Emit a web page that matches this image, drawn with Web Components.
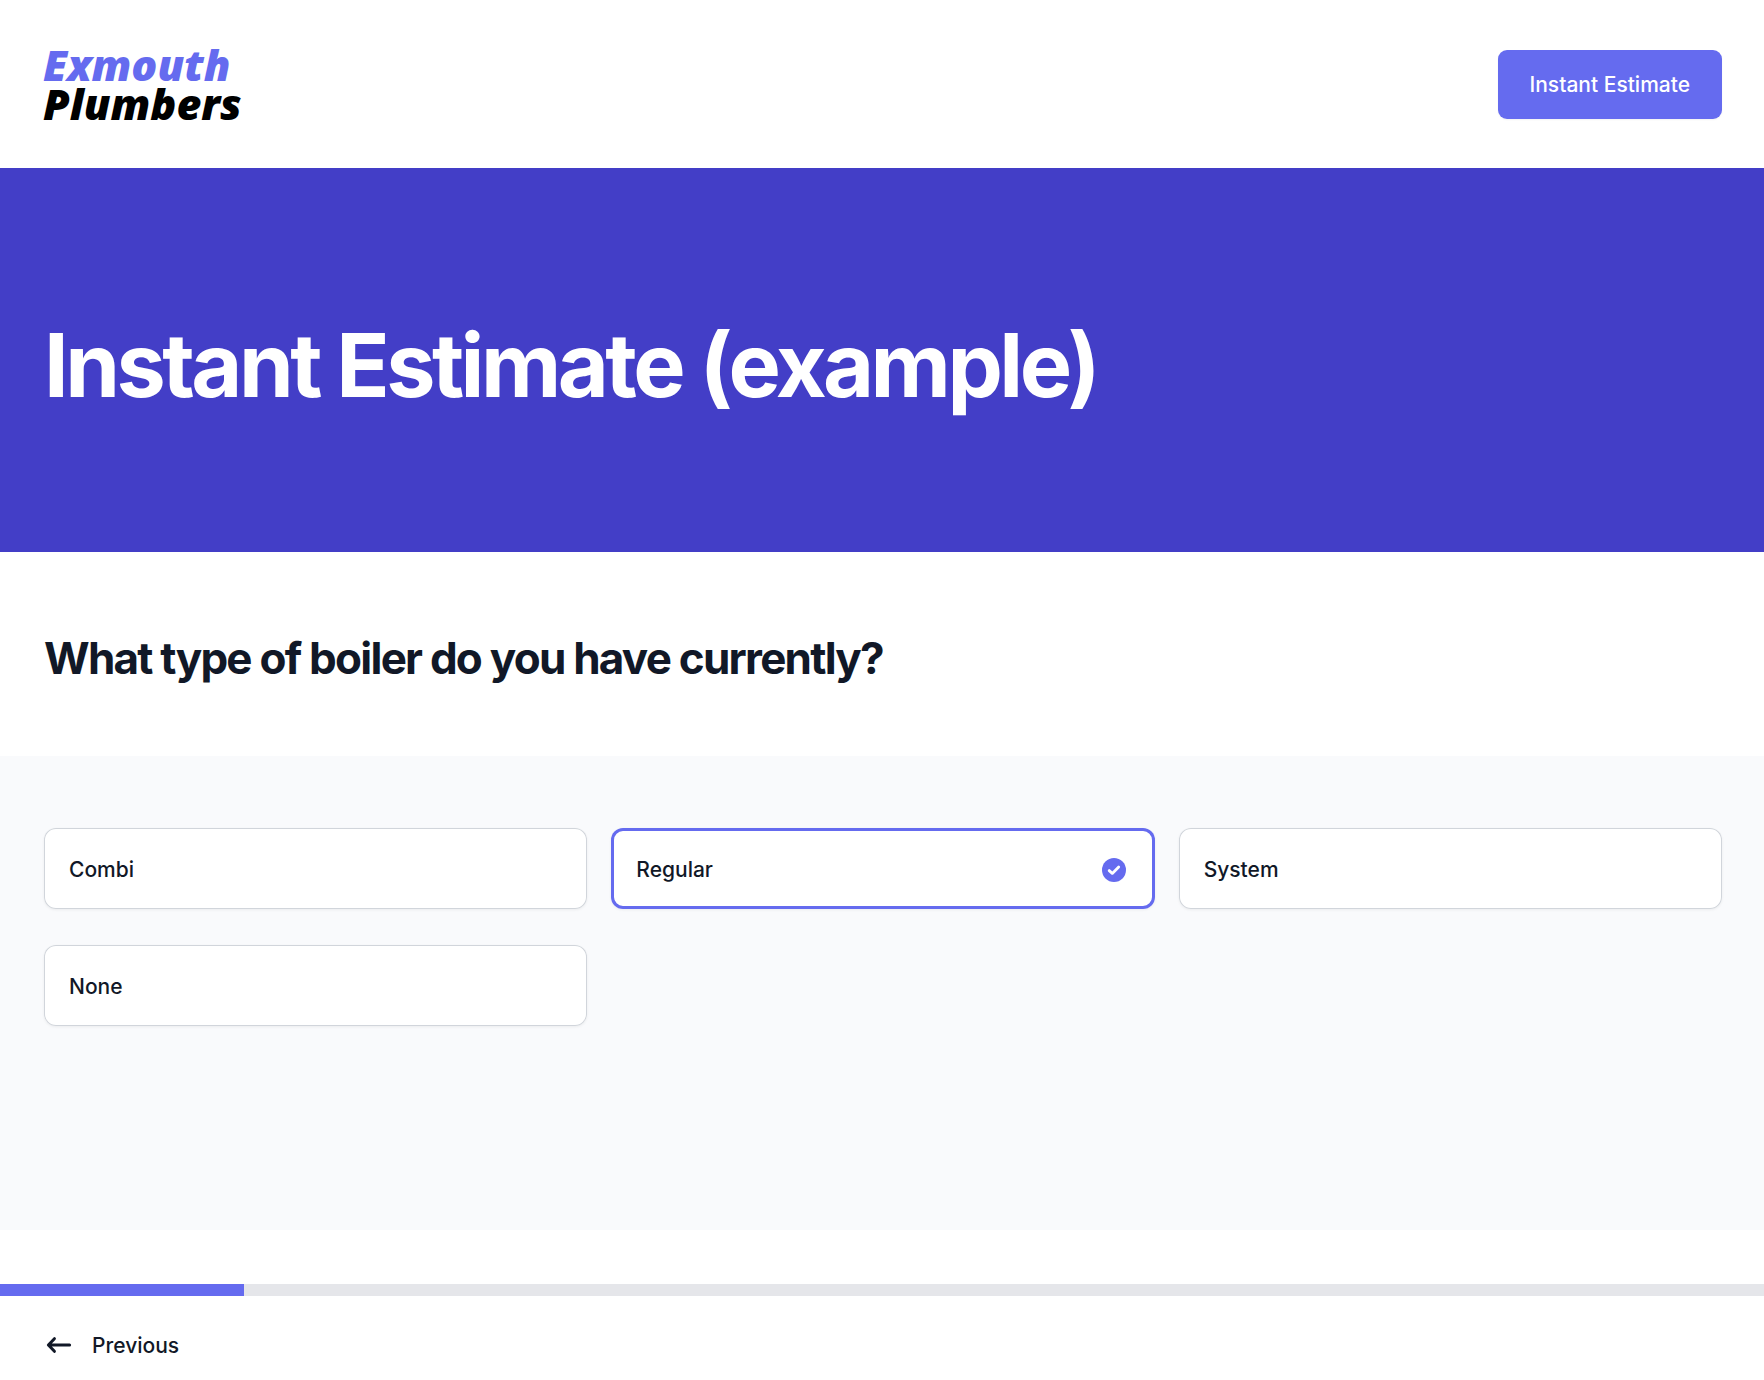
<!DOCTYPE html>
<html lang="en">
<head>
<meta charset="utf-8">
<meta name="viewport" content="width=device-width, initial-scale=1">
<title>Instant Estimate - Exmouth Plumbers</title>
<style>
:root {
  --brand: #656bef;
  --brand-dark: #433ec7;
  --ink: #111827;
  --gutter: 44px;
}
body {
  margin: 0;
  background: #fff;
  color: var(--ink);
  font: 500 21px/27px Inter, "Liberation Sans", sans-serif;
}
</style>
</head>
<body>
<estimate-page></estimate-page>

<script>
const define = (name, html, setup) => {
  const template = document.createElement('template');
  template.innerHTML = html;
  customElements.define(name, class extends HTMLElement {
    constructor() {
      super();
      this.attachShadow({ mode: 'open' }).append(template.content.cloneNode(true));
    }
    connectedCallback() { if (setup) setup(this, this.shadowRoot); }
  });
};

define('brand-logo', `
<style>
:host { display: block; }
a { display: block; color: #000; text-decoration: none; font: italic 800 43px/39px "Open Sans", "Noto Sans", sans-serif; }
span { display: block; }
.first { color: var(--brand); }
</style>
<a href="#"><span class="first">Exmouth</span><span>Plumbers</span></a>`);

define('cta-button', `
<style>
:host { display: block; }
button {
  display: block; margin: 0; padding: 21px 32px; border: 0; border-radius: 9px;
  background: var(--brand); color: #fff; font: inherit; cursor: pointer;
  box-shadow: 0 1px 2px rgb(0 0 0 / 5%);
}
</style>
<button type="button"><slot></slot></button>`);

define('site-header', `
<style>
:host { display: block; }
header { display: flex; align-items: center; justify-content: space-between; padding: 45px 42px 45px 43px; }
</style>
<header><brand-logo></brand-logo><cta-button>Instant Estimate</cta-button></header>`);

define('page-hero', `
<style>
:host { display: block; background: var(--brand-dark); }
h1 { margin: 0; padding: 152px var(--gutter) 142px; color: #fff; font-size: 88px; line-height: 90px; font-weight: 700; letter-spacing: -0.04em; }
</style>
<h1><slot></slot></h1>`);

define('question-title', `
<style>
:host { display: block; }
h2 { margin: 0; padding: 81px var(--gutter) 73px; font-size: 44px; line-height: 50px; font-weight: 700; letter-spacing: -0.04em; }
</style>
<h2><slot></slot></h2>`);

define('option-card', `
<style>
:host { display: block; }
label {
  box-sizing: border-box; display: flex; align-items: center; justify-content: space-between;
  padding: 28px 29px 26px 25px; border-radius: 12px; background: #fff; cursor: pointer;
  box-shadow: inset 0 0 0 1px #d1d5db, 0 1px 3px rgb(0 0 0 / 6%);
}
svg { display: block; width: 24px; height: 24px; visibility: hidden; }
:host([selected]) label { box-shadow: inset 0 0 0 3px var(--brand), 0 1px 3px rgb(0 0 0 / 6%); }
:host([selected]) svg { visibility: visible; }
input { appearance: none; width: 0; height: 0; margin: 0; outline: 0; }
.text { flex: 1; }
</style>
<label>
  <input type="radio" name="boiler">
  <span class="text"><slot></slot></span>
  <svg viewBox="0 0 24 24" aria-hidden="true"><circle cx="12" cy="12" r="12" fill="var(--brand)"/><path d="M7.2 12.6 10.3 15.4 16.7 9" fill="none" stroke="#fff" stroke-width="2.8" stroke-linecap="round" stroke-linejoin="round"/></svg>
</label>`, (host, root) => {
  const input = root.querySelector('input');
  input.checked = host.hasAttribute('selected');
  input.addEventListener('change', () => host.dispatchEvent(new CustomEvent('pick', { bubbles: true })));
});

define('option-grid', `
<style>
:host { display: block; background: #f9fafc; }
div { display: grid; grid-template-columns: repeat(3, 1fr); gap: 36px 24px; align-content: start; min-height: 330px; padding: 72px 42px 72px var(--gutter); }
</style>
<div role="radiogroup" aria-label="Boiler type"><slot></slot></div>`, host => {
  host.addEventListener('pick', event => {
    for (const card of host.children) {
      const on = card === event.target;
      card.toggleAttribute('selected', on);
      card.shadowRoot.querySelector('input').checked = on;
    }
  });
});

define('progress-track', `
<style>
:host { display: block; margin-top: 54px; background: #e5e6ea; }
div { width: 13.85%; height: 12px; background: var(--brand); }
</style>
<div role="progressbar" aria-label="Progress" aria-valuenow="14" aria-valuemin="0" aria-valuemax="100"></div>`);

define('step-nav', `
<style>
:host { display: block; padding: 36px var(--gutter) 21px; }
button { display: flex; align-items: center; gap: 18px; margin: 0; padding: 0; border: 0; background: none; color: inherit; font: inherit; cursor: pointer; }
svg { display: block; width: 30px; height: 27px; }
</style>
<button type="button">
  <svg viewBox="0 0 30 27" fill="none" stroke="currentColor" stroke-width="3" stroke-linecap="round" stroke-linejoin="round" aria-hidden="true"><path d="M10.4 6.7 4.4 13l6 6.3M4.4 13h21.2"/></svg>
  <slot></slot>
</button>`);

define('estimate-page', `
<style>:host { display: block; }</style>
<site-header></site-header>
<main>
  <page-hero>Instant Estimate (example)</page-hero>
  <question-title>What type of boiler do you have currently?</question-title>
  <option-grid>
    <option-card>Combi</option-card>
    <option-card selected>Regular</option-card>
    <option-card>System</option-card>
    <option-card>None</option-card>
  </option-grid>
  <progress-track></progress-track>
  <step-nav>Previous</step-nav>
</main>`);
</script>
</body>
</html>
